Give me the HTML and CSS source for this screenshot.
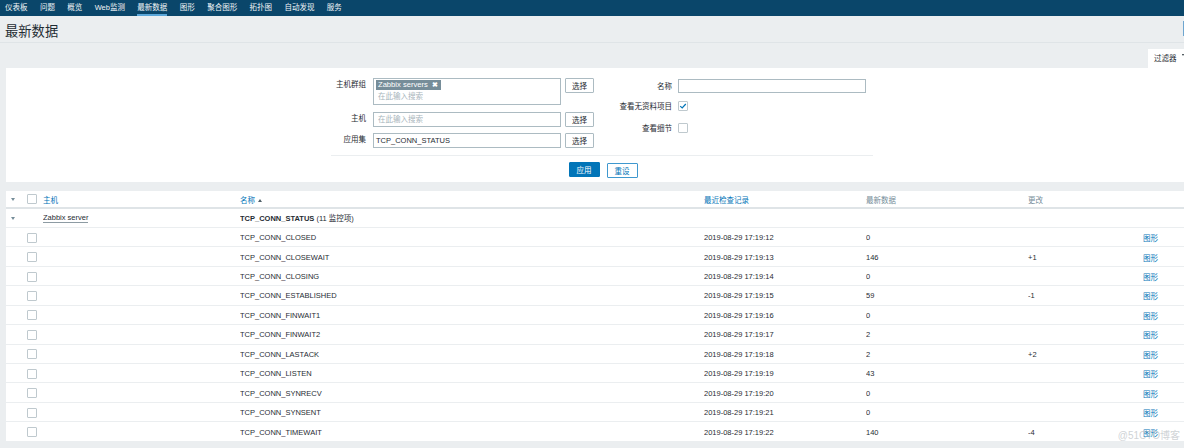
FILE: index.html
```html
<!DOCTYPE html>
<html lang="zh">
<head>
<meta charset="utf-8">
<title>最新数据</title>
<link rel="stylesheet" href="styles.css">
</head>
<body>
<nav class="topnav">
  <span class="nav-item">仪表板</span>
  <span class="nav-item">问题</span>
  <span class="nav-item">概览</span>
  <span class="nav-item">Web监测</span>
  <span class="nav-item active">最新数据</span>
  <span class="nav-item">图形</span>
  <span class="nav-item">聚合图形</span>
  <span class="nav-item">拓扑图</span>
  <span class="nav-item">自动发现</span>
  <span class="nav-item">服务</span>
</nav>
<header class="page-header">
  <h1 class="page-title">最新数据</h1>
  <span class="search-edge"></span>
</header>
<div class="filter-tabs">
  <div class="filter-tab"><span>过滤器</span><span class="tab-arrow"></span></div>
</div>
<section class="filter-panel">
  <div class="filter-form">
    <div class="filter-cols">
      <div class="grid-left">
        <label class="lbl">主机群组</label>
        <div class="multiselect">
          <span class="tag">Zabbix servers <span class="tag-x">✖</span></span>
          <span class="ph">在此输入搜索</span>
        </div>
        <button class="btn-sel">选择</button>
        <label class="lbl">主机</label>
        <div class="input"><span class="ph">在此输入搜索</span></div>
        <button class="btn-sel">选择</button>
        <label class="lbl">应用集</label>
        <div class="input">TCP_CONN_STATUS</div>
        <button class="btn-sel">选择</button>
      </div>
      <div class="col-right">
        <div class="rrow r1"><label class="rlbl">名称</label><div class="input wide"></div></div>
        <div class="rrow r2"><label class="rlbl">查看无资料项目</label><span class="cb checked"><svg viewBox="0 0 10 10" width="8" height="8"><path d="M1.5 5.2 L4 7.5 L8.5 2.5" fill="none" stroke="#0275b8" stroke-width="1.5"/></svg></span></div>
        <div class="rrow r3"><label class="rlbl">查看细节</label><span class="cb"></span></div>
      </div>
    </div>
    <div class="filter-buttons">
      <button class="btn-apply">应用</button>
      <button class="btn-reset">重设</button>
    </div>
  </div>
</section>
<section class="data-table-wrap">
  <table class="data-table">
    <colgroup>
      <col class="c-arrow"><col class="c-cb"><col class="c-host"><col class="c-name"><col class="c-check"><col class="c-val"><col class="c-chg"><col class="c-graph">
    </colgroup>
    <thead>
      <tr>
        <th><span class="tri-down"></span></th>
        <th><span class="cb"></span></th>
        <th class="link">主机</th>
        <th class="link">名称 <span class="tri-up"></span></th>
        <th class="link">最近检查记录</th>
        <th class="muted">最新数据</th>
        <th class="muted">更改</th>
        <th></th>
      </tr>
    </thead>
    <tbody>
      <tr class="group">
        <td><span class="tri-down"></span></td>
        <td></td>
        <td><span class="host">Zabbix server</span></td>
        <td><b>TCP_CONN_STATUS</b> (11 监控项)</td>
        <td></td><td></td><td></td><td></td>
      </tr>
      <tr><td></td><td><span class="cb"></span></td><td></td><td>TCP_CONN_CLOSED</td><td>2019-08-29 17:19:12</td><td>0</td><td></td><td class="link">图形</td></tr>
      <tr><td></td><td><span class="cb"></span></td><td></td><td>TCP_CONN_CLOSEWAIT</td><td>2019-08-29 17:19:13</td><td>146</td><td>+1</td><td class="link">图形</td></tr>
      <tr><td></td><td><span class="cb"></span></td><td></td><td>TCP_CONN_CLOSING</td><td>2019-08-29 17:19:14</td><td>0</td><td></td><td class="link">图形</td></tr>
      <tr><td></td><td><span class="cb"></span></td><td></td><td>TCP_CONN_ESTABLISHED</td><td>2019-08-29 17:19:15</td><td>59</td><td>-1</td><td class="link">图形</td></tr>
      <tr><td></td><td><span class="cb"></span></td><td></td><td>TCP_CONN_FINWAIT1</td><td>2019-08-29 17:19:16</td><td>0</td><td></td><td class="link">图形</td></tr>
      <tr><td></td><td><span class="cb"></span></td><td></td><td>TCP_CONN_FINWAIT2</td><td>2019-08-29 17:19:17</td><td>2</td><td></td><td class="link">图形</td></tr>
      <tr><td></td><td><span class="cb"></span></td><td></td><td>TCP_CONN_LASTACK</td><td>2019-08-29 17:19:18</td><td>2</td><td>+2</td><td class="link">图形</td></tr>
      <tr><td></td><td><span class="cb"></span></td><td></td><td>TCP_CONN_LISTEN</td><td>2019-08-29 17:19:19</td><td>43</td><td></td><td class="link">图形</td></tr>
      <tr><td></td><td><span class="cb"></span></td><td></td><td>TCP_CONN_SYNRECV</td><td>2019-08-29 17:19:20</td><td>0</td><td></td><td class="link">图形</td></tr>
      <tr><td></td><td><span class="cb"></span></td><td></td><td>TCP_CONN_SYNSENT</td><td>2019-08-29 17:19:21</td><td>0</td><td></td><td class="link">图形</td></tr>
      <tr><td></td><td><span class="cb"></span></td><td></td><td>TCP_CONN_TIMEWAIT</td><td>2019-08-29 17:19:22</td><td>140</td><td>-4</td><td class="link">图形</td></tr>
    </tbody>
  </table>
  <span class="watermark">@51CTO博客</span>
</section>
</body>
</html>
```
FILE: styles.css
```css
html, body {
  margin: 0;
  padding: 0;
  overflow: hidden;
}
body {
  width: 1184px;
  height: 448px;
  background: #ebeef0;
  font-family: "Liberation Sans", "Noto Sans CJK SC", sans-serif;
  font-size: 7.5px;
  color: #1f2c33;
}
.topnav {
  height: 16px;
  background: #0a466a;
  display: flex;
  align-items: stretch;
  gap: 12.4px;
  padding-left: 5px;
  box-sizing: border-box;
}
.nav-item {
  color: #f0f4f6;
  line-height: 15px;
  box-sizing: border-box;
  height: 16px;
}
.nav-item.active {
  border-bottom: 2px solid #5aa6d8;
}
.page-header {
  height: 27px;
  display: flex;
  align-items: center;
  padding: 0 0 0 5px;
  border-bottom: 1px solid #dfe4e7;
  box-sizing: border-box;
  position: relative;
}
.page-title {
  margin: 0;
  font-size: 13.3px;
  font-weight: normal;
  color: #1f2c33;
  padding-top: 3px;
}
.search-edge {
  margin-left: auto;
  width: 1px;
  height: 15px;
  background: #6ea6d0;
  margin-top: -2px;
}
.filter-tabs {
  height: 25px;
  display: flex;
  justify-content: flex-end;
  align-items: flex-end;
}
.filter-tab {
  width: 36px;
  height: 19px;
  background: #fff;
  display: flex;
  align-items: center;
  padding-left: 6px;
  box-sizing: border-box;
  gap: 5px;
  padding-bottom: 3px;
}
.tab-arrow {
  width: 0;
  height: 0;
  border-left: 1.5px solid transparent;
  border-right: 1.5px solid transparent;
  border-top: 2.5px solid #1f2c33;
  margin-top: -5px;
}
.filter-panel {
  margin-left: 6px;
  background: #fff;
  height: 114px;
  padding-top: 10px;
  box-sizing: border-box;
}
.filter-form {
  margin-left: 325px;
  width: 542px;
}
.filter-cols {
  display: flex;
  border-bottom: 1px solid #ebeef0;
  padding-bottom: 7px;
}
.grid-left {
  display: grid;
  grid-template-columns: 38px 188px 29px;
  grid-template-rows: 27px 15px 15px;
  column-gap: 4px;
  row-gap: 6.5px;
}
.lbl {
  justify-self: end;
  padding-right: 3px;
  line-height: 14px;
}
.multiselect {
  border: 1px solid #acbbc2;
  box-sizing: border-box;
  padding: 1px 2px;
  display: flex;
  flex-direction: column;
  align-items: flex-start;
  gap: 2px;
}
.tag {
  background: #768d99;
  color: #fff;
  line-height: 10px;
  padding: 0 3px 0 2px;
  font-size: 7.6px;
}
.tag-x {
  font-size: 6.5px;
  font-weight: bold;
  margin-left: 2px;
}
.ph {
  color: #a7b4bb;
  line-height: 10px;
  padding-left: 2px;
}
.multiselect .ph {
  line-height: 9px;
}
.input {
  border: 1px solid #acbbc2;
  box-sizing: border-box;
  height: 15px;
  line-height: 13px;
  padding-left: 2px;
  color: #1f2c33;
}
.btn-sel {
  height: 15px;
  border: 1px solid #acbbc2;
  background: #fff;
  font: inherit;
  color: #1f2c33;
  padding: 0;
  box-sizing: border-box;
  border-radius: 1px;
}
.col-right {
  margin-left: 8px;
  display: flex;
  flex-direction: column;
}
.rrow {
  display: flex;
  align-items: center;
}
.r1 { height: 15px; }
.r2 { height: 11px; margin-top: 7px; }
.r3 { height: 11px; margin-top: 11px; }
.rlbl {
  width: 72px;
  text-align: right;
  padding-right: 2px;
  box-sizing: border-box;
  margin-right: 4px;
}
.input.wide {
  width: 188px;
  height: 14px;
}
.cb {
  display: inline-flex;
  align-items: center;
  justify-content: center;
  width: 10px;
  height: 10px;
  border: 1px solid #bfc9ce;
  box-sizing: border-box;
  background: #fff;
  border-radius: 1px;
  vertical-align: middle;
}
.filter-buttons {
  display: flex;
  justify-content: center;
  gap: 7px;
  padding: 6px 0 0 0;
}
.btn-apply, .btn-reset {
  font: inherit;
  height: 15px;
  padding: 0 7px;
  box-sizing: border-box;
  border-radius: 1px;
}
.btn-apply {
  background: #0275b8;
  border: 1px solid #0275b8;
  color: #fff;
  margin-left: 2px;
}
.btn-reset {
  background: #fff;
  border: 1px solid #3f98cf;
  color: #0275b8;
  margin-top: 1px;
}
.data-table-wrap {
  margin: 9px 0 0 6px;
  background: #fff;
  position: relative;
}
.data-table {
  width: 100%;
  border-collapse: collapse;
  table-layout: fixed;
}
.c-arrow { width: 14px; }
.c-cb { width: 23px; }
.c-host { width: 197px; }
.c-name { width: 464px; }
.c-check { width: 162px; }
.c-val { width: 162px; }
.c-chg { width: 115px; }
.data-table th {
  font-weight: normal;
  text-align: left;
  height: 16px;
  padding: 0;
  border-bottom: 2px solid #dfe4e7;
  white-space: nowrap;
}
.data-table td {
  height: 19.45px;
  padding: 1px 0 0 0;
  box-sizing: border-box;
  border-bottom: 1px solid #ebeef0;
  white-space: nowrap;
  overflow: hidden;
}
.data-table tbody tr.group td {
  padding-top: 0;
}
.data-table tbody tr:last-child td {
  border-bottom: none;
}
.data-table th:nth-child(1), .data-table td:nth-child(1) {
  text-align: center;
}
.data-table th:nth-child(2), .data-table td:nth-child(2) {
  padding-left: 7px;
}
.data-table .cb {
  display: flex;
}
.link {
  color: #0275b8;
}
.muted {
  color: #768d99;
}
.tri-down {
  display: inline-block;
  width: 0;
  height: 0;
  border-left: 2px solid transparent;
  border-right: 2px solid transparent;
  border-top: 3px solid #768d99;
  vertical-align: middle;
}
.tri-up {
  display: inline-block;
  width: 0;
  height: 0;
  border-left: 2px solid transparent;
  border-right: 2px solid transparent;
  border-bottom: 3px solid #4f5f68;
  vertical-align: middle;
  margin-left: 1px;
  margin-top: -1px;
}
.host {
  border-bottom: 1px solid #8d9ba3;
  line-height: 9px;
  display: inline-block;
}
.group td b {
  font-weight: bold;
}
.watermark {
  position: absolute;
  right: 4px;
  bottom: -1px;
  font-size: 10px;
  color: rgba(190, 196, 200, 0.75);
  pointer-events: none;
}
```
